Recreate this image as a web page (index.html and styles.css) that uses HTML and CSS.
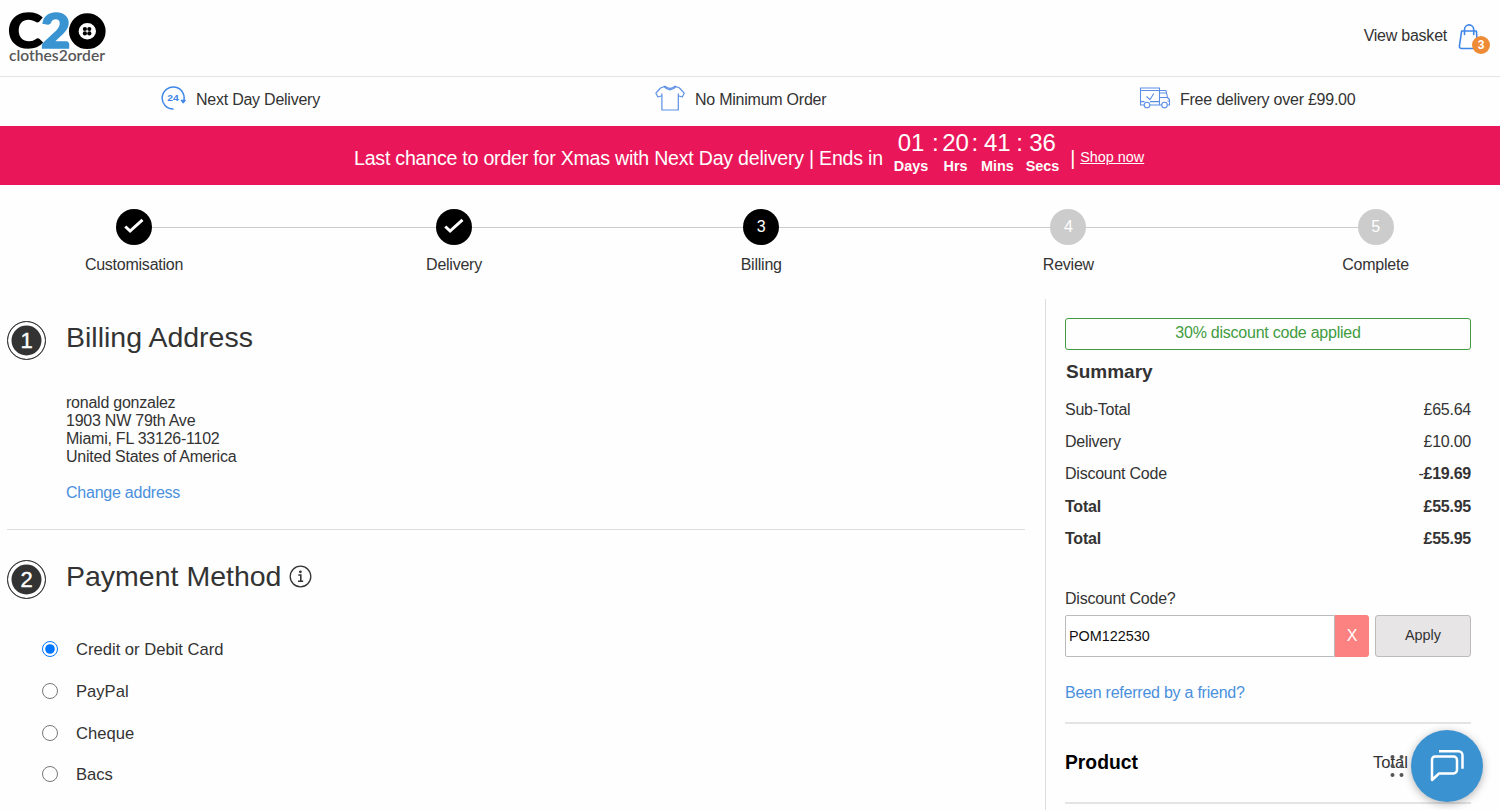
FILE: index.html
```html
<!DOCTYPE html>
<html lang="en">
<head>
    <meta charset="UTF-8">
    <meta name="viewport" content="width=device-width, initial-scale=1.0">
    <title>Billing | clothes2order</title>
    <link rel="stylesheet" href="styles.css">
</head>
<body>
    <!-- Header -->
    <header class="header">
        <a class="logo" href="#">
            <svg width="106" height="68" viewBox="0 0 106 68">
                <text class="logo-big" x="1" y="47.5" textLength="34.5" lengthAdjust="spacingAndGlyphs">C</text>
                <text class="logo-big logo-blue" x="34" y="47.5" textLength="29.5" lengthAdjust="spacingAndGlyphs">2</text>
                <ellipse cx="80.3" cy="31.2" rx="13.5" ry="13.1" fill="#fff" stroke="#000" stroke-width="9.6"/>
                <g fill="#000">
                    <circle cx="77.9" cy="29" r="2.1"/>
                    <circle cx="82.3" cy="29" r="2.1"/>
                    <circle cx="77.9" cy="33.4" r="2.1"/>
                    <circle cx="82.3" cy="33.4" r="2.1"/>
                </g>
                <text class="logo-small" x="2" y="60.7" textLength="96" lengthAdjust="spacingAndGlyphs">clothes2order</text>
            </svg>
        </a>
        <a class="basket" href="#">
            <span>View basket</span>
            <span class="basket-icon">
                <svg width="22" height="28" viewBox="0 0 22 28" fill="none" stroke="#3f86e8" stroke-width="1.6" stroke-linecap="round" stroke-linejoin="round">
                    <path d="M3.6 8h14.8l1 15.2a2 2 0 0 1-2 2.3H3.4a2 2 0 0 1-2-2.3z"/>
                    <path d="M6.5 11.5V6.5a4.6 4.6 0 0 1 9.2 0v5"/>
                </svg>
                <span class="basket-count">3</span>
            </span>
        </a>
    </header>

    <!-- Delivery messages -->
    <div class="usp-bar">
        <div class="usp usp-next-day">
            <svg width="26" height="26" viewBox="0 0 26 26" fill="none" stroke="#3f86e8" stroke-width="1.5">
                <path d="M13.5 24A11 11 0 1 1 23.4 17"/>
                <path d="M21 15.2l2.2 3 2.4-2.9z" fill="#3f86e8" stroke-width="1"/>
                <text class="usp-24" x="7.2" y="15.8" textLength="11.5" lengthAdjust="spacingAndGlyphs">24</text>
            </svg>
            <span>Next Day Delivery</span>
        </div>
        <div class="usp usp-minimum">
            <svg width="30" height="26" viewBox="0 0 30 26" fill="none" stroke="#5b8fe6" stroke-width="1.2" stroke-linejoin="round">
                <path d="M10 1.2L5.5 3 .9 8.2l2 3.8 4-1.2V25h16.4V10.8l4 1.2 1.900-3.8L24.500 3 20 1.200Q15 5.600 10 1.200z"/>
                <path d="M8.800 1.700Q15 8 21.200 1.700M6.900 10.800V8.500M23.300 10.800V8.500"/>
            </svg>
            <span>No Minimum Order</span>
        </div>
        <div class="usp usp-free">
            <svg width="32" height="22" viewBox="0 0 32 22" fill="none" stroke="#5b8fe6" stroke-width="1.1" stroke-linejoin="round">
                <path d="M5.200 18H1.500V1h19v17H10.800M1.500 14.600h4M11 14.600h9.500M1.500 3.500h19M20.500 3.500h6.500l1.500 7 2 2v5.500h-2M20.500 18h2M20.500 6h6.800M20.500 10.500h8M28.500 14h2"/>
                <circle cx="8" cy="18" r="2.800"/>
                <circle cx="25.500" cy="18" r="2.800"/>
                <path d="M7.500 9.500l3.400 3.200 3.900-6.200"/>
            </svg>
            <span>Free delivery over £99.00</span>
        </div>
    </div>

    <!-- Countdown banner -->
    <div class="banner">
        <span class="banner-text">Last chance to order for Xmas with Next Day delivery | Ends in</span>
        <div class="countdown">
            <div class="unit"><span class="digits">01</span><span class="unit-name">Days</span></div>
            <span class="colon colon-days">:</span>
            <div class="unit"><span class="digits">20</span><span class="unit-name">Hrs</span></div>
            <span class="colon">:</span>
            <div class="unit"><span class="digits">41</span><span class="unit-name">Mins</span></div>
            <span class="colon">:</span>
            <div class="unit"><span class="digits">36</span><span class="unit-name">Secs</span></div>
        </div>
        <span class="banner-text">|</span>
        <a class="shop-now" href="#">Shop now</a>
    </div>

    <!-- Checkout steps -->
    <div class="steps">
        <div class="step">
            <span class="step-circle">
                <svg width="20" height="18" viewBox="0 0 20 18" fill="none" stroke="#fff" stroke-width="3"><path d="M1.300 8.500l4.800 4.500L18.500 1.800"/></svg>
            </span>
            <span class="step-label">Customisation</span>
        </div>
        <div class="step-line step-line-first"></div>
        <div class="step">
            <span class="step-circle">
                <svg width="20" height="18" viewBox="0 0 20 18" fill="none" stroke="#fff" stroke-width="3"><path d="M1.300 8.500l4.800 4.500L18.500 1.800"/></svg>
            </span>
            <span class="step-label">Delivery</span>
        </div>
        <div class="step-line"></div>
        <div class="step">
            <span class="step-circle">3</span>
            <span class="step-label">Billing</span>
        </div>
        <div class="step-line"></div>
        <div class="step">
            <span class="step-circle step-todo">4</span>
            <span class="step-label">Review</span>
        </div>
        <div class="step-line"></div>
        <div class="step">
            <span class="step-circle step-todo">5</span>
            <span class="step-label">Complete</span>
        </div>
    </div>

    <div class="content">
        <main class="main">
            <!-- Billing address -->
            <section class="section section-address">
                <span class="number">1</span>
                <div class="section-body">
                    <h2>Billing Address</h2>
                    <address>
                        ronald gonzalez<br>
                        1903 NW 79th Ave<br>
                        Miami, FL 33126-1102<br>
                        United States of America
                    </address>
                    <a class="link" href="#">Change address</a>
                </div>
            </section>

            <!-- Payment method -->
            <section class="section">
                <span class="number">2</span>
                <div class="section-body">
                    <h2>Payment Method
                        <svg class="info" width="23" height="23" viewBox="0 0 23 23">
                            <circle cx="11.500" cy="11.500" r="10.300" fill="none" stroke="#333" stroke-width="1.300"/>
                            <circle cx="11.400" cy="6.800" r="1.400" fill="#333"/>
                            <path d="M9.300 10h2.500v6M9 16.300h5.200" fill="none" stroke="#333" stroke-width="1.600"/>
                        </svg>
                    </h2>
                </div>
            </section>
            <form class="payment-options">
                <label><input type="radio" name="payment" checked> Credit or Debit Card</label>
                <label><input type="radio" name="payment"> PayPal</label>
                <label><input type="radio" name="payment"> Cheque</label>
                <label><input type="radio" name="payment"> Bacs</label>
            </form>
        </main>

        <!-- Order summary -->
        <aside class="sidebar">
            <div class="discount-applied">30% discount code applied</div>
            <h3>Summary</h3>
            <div class="row"><span>Sub-Total</span><span>£65.64</span></div>
            <div class="row"><span>Delivery</span><span>£10.00</span></div>
            <div class="row"><span>Discount Code</span><span>-<b>£19.69</b></span></div>
            <div class="row row-bold"><span>Total</span><span>£55.95</span></div>
            <div class="row row-bold"><span>Total</span><span>£55.95</span></div>

            <label class="code-label" for="code">Discount Code?</label>
            <div class="code-form">
                <input type="text" id="code" value="POM122530">
                <button class="remove" type="button">X</button>
                <button class="apply" type="button">Apply</button>
            </div>
            <a class="link" href="#">Been referred by a friend?</a>

            <div class="product-head">
                <h4>Product</h4>
                <span>Total</span>
            </div>
        </aside>
    </div>

    <!-- Chat widget -->
    <div class="chat">
        <svg width="14" height="24" viewBox="0 0 14 24" fill="#555">
            <circle cx="2.500" cy="3" r="2"/><circle cx="11.500" cy="3" r="2"/>
            <circle cx="2.500" cy="12" r="2"/><circle cx="11.500" cy="12" r="2"/>
            <circle cx="2.500" cy="21" r="2"/><circle cx="11.500" cy="21" r="2"/>
        </svg>
        <button class="chat-button" type="button" aria-label="Chat">
            <svg width="34" height="34" viewBox="0 0 34 34" fill="none" stroke="#fff" stroke-width="2.500" stroke-linejoin="round">
                <path d="M5 7.500h18.500a3.500 3.500 0 0 1 3.500 3.500v10a3.500 3.500 0 0 1-3.500 3.500H9l-7 6.500V10.500a3 3 0 0 1 3-3z"/>
                <path d="M9 2.300h19.500a4 4 0 0 1 4 4v13.500"/>
            </svg>
        </button>
    </div>
</body>
</html>
```
FILE: styles.css
```css
/* General Styles */
* {
    box-sizing: border-box;
}

body {
    margin: 0;
    height: 810px;
    overflow: hidden;
    font-family: "Liberation Sans", Arial, sans-serif;
    font-size: 16px;
    letter-spacing: -0.24px;
    line-height: 18px;
    color: #333;
    background: #fefefe;
}

a {
    text-decoration: none;
    color: inherit;
}

h2, h3, h4 {
    margin: 0;
    letter-spacing: 0;
}

/* Header */
.header {
    display: flex;
    justify-content: space-between;
    height: 77px;
    padding: 0 10px 0 7px;
    border-bottom: 1px solid #e4e4e4;
}

.logo-big {
    font-family: Lato, sans-serif;
    font-size: 47px;
    font-weight: 900;
    letter-spacing: 0;
    stroke: #000;
    stroke-width: 1.6px;
}

.logo-blue {
    fill: #3a94d2;
    stroke: #3a94d2;
}

.logo-small {
    font-family: Lato, sans-serif;
    font-size: 14.5px;
    font-weight: 600;
    letter-spacing: 0;
    fill: #58585a;
}

.basket {
    display: flex;
    align-items: flex-start;
    gap: 11px;
    padding-top: 27px;
}

.basket-icon {
    position: relative;
    width: 32px;
    margin-top: -4px;
}

/* Count sits over the corner of the bag */
.basket-count {
    position: absolute;
    right: 0;
    top: 13px;
    width: 18px;
    height: 18px;
    border-radius: 50%;
    background: #ee8b36;
    color: #fff;
    font-size: 12px;
    font-weight: bold;
    text-align: center;
}

/* Delivery messages */
.usp-bar {
    display: flex;
    height: 49px;
}

.usp {
    display: flex;
    align-items: center;
    height: 42px;
}

.usp span {
    padding-top: 3px;
}

.usp-next-day {
    width: 655px;
    padding-left: 160px;
    gap: 10px;
}

.usp-minimum {
    width: 484px;
    gap: 10px;
}

.usp-free {
    gap: 9px;
}

.usp-24 {
    font-family: "Liberation Sans", Arial, sans-serif;
    font-size: 9.5px;
    font-weight: bold;
    letter-spacing: 0;
    fill: #3f86e8;
    stroke: none;
}

/* Countdown banner */
.banner {
    display: flex;
    align-items: center;
    height: 59px;
    padding: 2px 0 0 354px;
    background: #e91759;
    color: #fff;
    letter-spacing: 0;
}

.banner-text {
    font-size: 19.6px;
    letter-spacing: -0.23px;
    padding-top: 2px;
}

.countdown {
    display: flex;
    margin: 0 11px 0 11px;
    padding-bottom: 7px;
}

.unit {
    display: flex;
    flex-direction: column;
    align-items: center;
}

.digits {
    font-size: 24px;
    line-height: 26px;
}

.unit-name {
    font-size: 14.4px;
    font-weight: bold;
    line-height: 21px;
}

.colon {
    width: 12px;
    text-align: center;
    font-size: 24px;
    line-height: 26px;
}

.colon-days {
    width: 14px;
}

.shop-now {
    margin-left: 5px;
    font-size: 14.4px;
    text-decoration: underline;
}

/* Checkout steps */
.steps {
    display: flex;
    height: 114px;
    padding: 24px 0 0 116px;
}

.step {
    display: flex;
    flex-direction: column;
    align-items: center;
    width: 36px;
}

.step-circle {
    display: flex;
    justify-content: center;
    align-items: center;
    width: 36px;
    height: 36px;
    flex-shrink: 0;
    border-radius: 50%;
    background: #000;
    color: #fff;
}

.step-todo {
    background: #ccc;
}

.step-label {
    margin-top: 11px;
}

.step-line {
    width: 271.2px;
    height: 1px;
    margin-top: 18px;
    background: #ccc;
}

.step-line-first {
    width: 284px;
}

/* Page columns */
.content {
    display: flex;
    height: 511px;
}

.main {
    width: 1045px;
    padding: 20px 20px 0 7px;
}

.section {
    display: flex;
    gap: 20px;
}

.section-address {
    height: 211px;
    margin-bottom: 28px;
    border-bottom: 1px solid #ddd;
}

/* Dark disc with an outer ring */
.number {
    display: flex;
    justify-content: center;
    align-items: center;
    width: 39px;
    height: 39px;
    margin-top: 2px;
    border: 1px solid #333;
    border-radius: 50%;
    background: #333;
    box-shadow: inset 0 0 0 3.5px #fff;
    color: #fff;
    font-size: 22px;
    -webkit-text-stroke: 0.4px #fff;
}

h2 {
    display: flex;
    align-items: center;
    gap: 8px;
    height: 37px;
    font-size: 28.5px;
    font-weight: normal;
    line-height: 37px;
}

address {
    margin: 38px 0 18px;
    font-style: normal;
}

.link {
    color: #4a90dd;
}

.payment-options {
    display: flex;
    flex-direction: column;
    gap: 21.8px;
    margin-top: 41px;
    padding-left: 35px;
}

.payment-options label {
    display: flex;
    align-items: center;
    gap: 18px;
    height: 20px;
    font-size: 16.6px;
    letter-spacing: 0;
}

.payment-options input {
    width: 16px;
    height: 16px;
    margin: 0 0 2px;
    accent-color: #0075ff;
}

/* Order summary */
.sidebar {
    width: 426px;
    padding: 19px 0 0 19px;
    border-left: 1px solid #ddd;
}

.discount-applied {
    height: 32px;
    border: 1px solid #419c41;
    border-radius: 3px;
    color: #419c41;
    text-align: center;
    line-height: 28px;
}

h3 {
    margin: 10px 0 13px 1px;
    font-size: 19px;
    line-height: 24px;
}

.row {
    display: flex;
    justify-content: space-between;
    height: 32.2px;
    line-height: 26px;
}

.row-bold {
    font-weight: bold;
}

.code-label {
    display: block;
    margin: 32px 0 7px;
}

.code-form {
    display: flex;
    height: 42px;
    margin-bottom: 27px;
}

.code-form input,
.code-form button {
    font-family: inherit;
    font-size: 14.4px;
    padding: 0 3px;
    border: 1px solid #bbb;
}

.code-form input {
    width: 270px;
    border-radius: 2px 0 0 2px;
    background: #fff;
    color: #111;
}

.code-form .remove {
    width: 34px;
    margin-right: 6px;
    border: none;
    border-radius: 0 3px 3px 0;
    background: #fc8181;
    color: #fff;
    font-size: 16px;
}

.code-form .apply {
    width: 96px;
    padding-bottom: 2px;
    border-radius: 3px;
    background: #e8e5e6;
    color: #333;
}

.product-head {
    display: flex;
    justify-content: space-between;
    align-items: center;
    height: 82px;
    margin-top: 20px;
    padding-right: 63px;
    border-top: 2px solid #e4e4e4;
    border-bottom: 2px solid #e4e4e4;
}

.product-head span {
    font-size: 16.6px;
    letter-spacing: 0;
}

h4 {
    font-size: 19.3px;
    color: #000;
}

/* Chat widget */
.chat {
    position: fixed;
    right: 17px;
    bottom: 8px;
    display: flex;
    align-items: center;
    gap: 7px;
}

.chat-button {
    display: flex;
    justify-content: center;
    align-items: center;
    width: 72px;
    height: 72px;
    padding: 0;
    border: none;
    border-radius: 50%;
    background: #3a92d1;
    box-shadow: 0 2px 8px rgba(0, 0, 0, 0.3);
}
```
